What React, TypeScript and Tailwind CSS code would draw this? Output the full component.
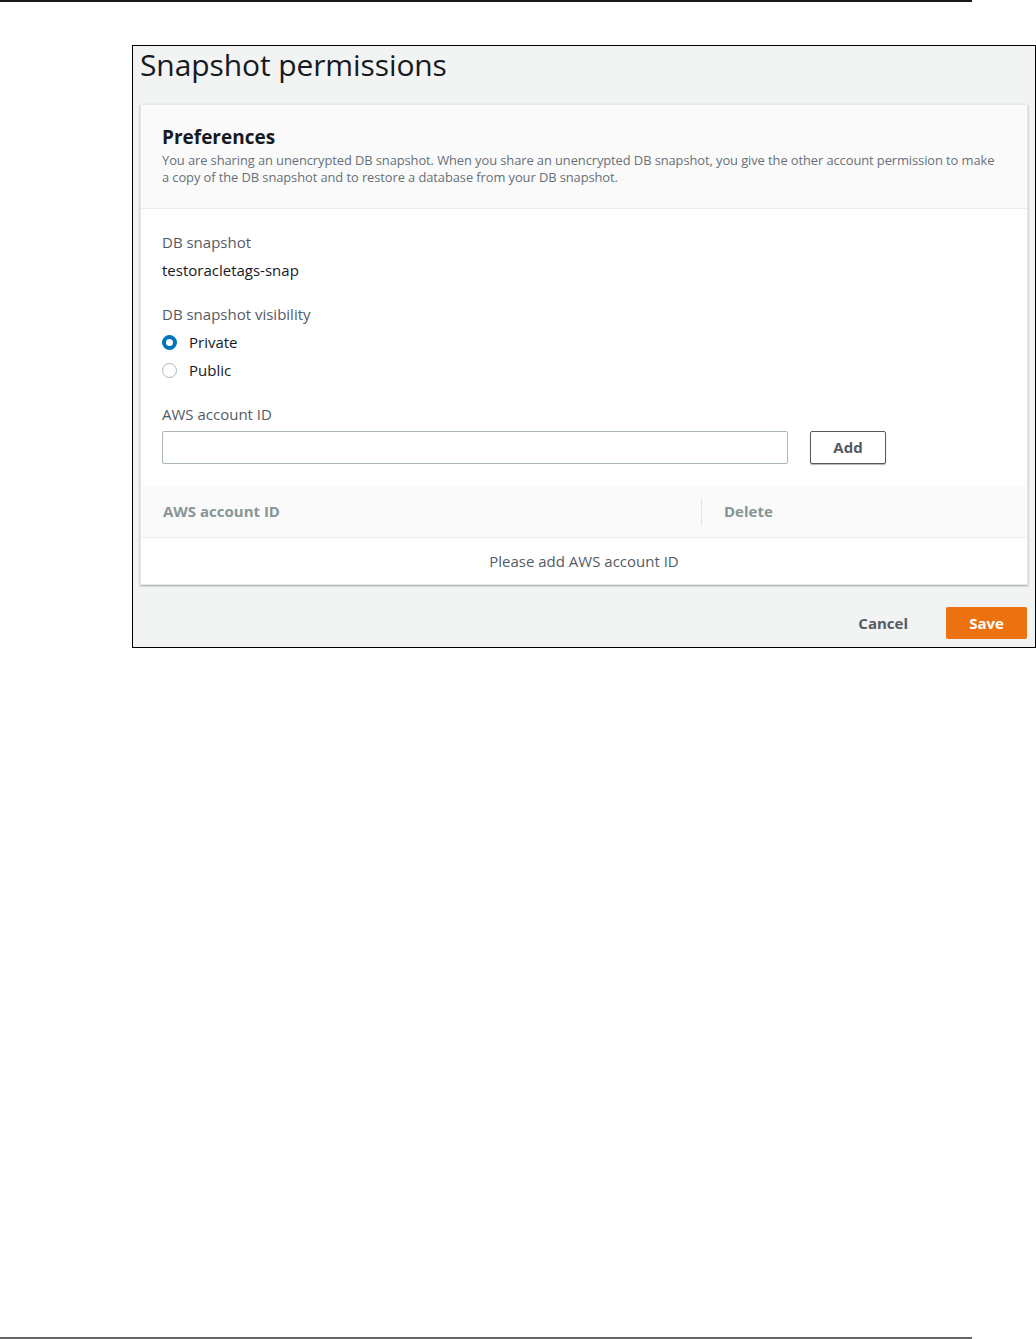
import React from "react";

export default function App() {
  const font = { fontFamily: '"Open Sans", "Noto Sans", sans-serif' };
  return (
    <div className="relative w-[1036px] h-[1339px] bg-white" style={font}>
      <div className="absolute left-0 top-0 w-[972px] h-[2px] bg-[#1a1a1a]" />
      <div className="absolute left-0 top-[1337px] w-[972px] h-[2px] bg-[#666]" />
      <div className="pt-[45px] pl-[132px]">
        <div className="w-[904px] h-[603px] border border-black bg-[#f2f3f3] flex flex-col px-[7px]">
          <div className="h-[58px] text-[30px] leading-[38px] text-[#16191f] tracking-[-0.1px]">Snapshot permissions</div>
          <div className="bg-white shadow-[0_1px_2px_rgba(0,0,0,0.35)] border border-[#e5e7e8]">
            <div className="bg-[#fafafa] border-b border-[#eaeded] h-[104px] px-[21px] pt-[19px]">
              <div className="text-[19px] font-bold text-[#16191f] leading-[26px]">Preferences</div>
              <div className="whitespace-nowrap text-[12.9px] leading-[17px] text-[#687078] mt-[2px] tracking-[-0.08px]">
                You are sharing an unencrypted DB snapshot. When you share an unencrypted DB snapshot, you give the other account permission to make
                <br />
                a copy of the DB snapshot and to restore a database from your DB snapshot.
              </div>
            </div>
            <div className="px-[21px] pt-[22px] pb-[22px]">
              <div className="text-[15px] text-[#545b64] leading-[22px]">DB snapshot</div>
              <div className="text-[15px] text-[#16191f] leading-[22px] mt-[6px]">testoracletags-snap</div>
              <div className="text-[15px] text-[#545b64] leading-[22px] mt-[22px]">DB snapshot visibility</div>
              <div className="flex items-center gap-[12px] mt-[6px] h-[22px]">
                <span className="w-[15px] h-[15px] rounded-full border-[4px] border-[#0073bb] bg-white" />
                <span className="text-[15px] text-[#16191f]">Private</span>
              </div>
              <div className="flex items-center gap-[12px] mt-[6px] h-[22px]">
                <span className="w-[15px] h-[15px] rounded-full border border-[#aab7b8] bg-white" />
                <span className="text-[15px] text-[#16191f]">Public</span>
              </div>
              <div className="text-[15px] text-[#545b64] leading-[22px] mt-[22px]">AWS account ID</div>
              <div className="flex items-center mt-[6px]">
                <div className="w-[626px] h-[33px] border border-[#aab7b8] rounded-[2px] bg-white" />
                <button className="ml-[22px] w-[76px] h-[33px] border border-[#545b64] rounded-[2px] bg-white text-[15px] font-bold text-[#545b64] shadow-[0_1px_1px_rgba(0,0,0,0.3)]">Add</button>
              </div>
            </div>
            <div className="bg-[#fafafa] h-[52px] flex items-center border-b border-[#eaeded]">
              <div className="w-[560px] pl-[22px] text-[15px] font-bold text-[#879596]">AWS account ID</div>
              <div className="h-[28px] w-px bg-[#e1e4e5]" />
              <div className="pl-[22px] text-[15px] font-bold text-[#879596]">Delete</div>
            </div>
            <div className="h-[46px] flex items-center justify-center text-[15px] text-[#545b64]">Please add AWS account ID</div>
          </div>
          <div className="flex justify-end items-center pt-[22px] pr-px">
            <span className="text-[15px] font-bold text-[#545b64] mr-[38px]">Cancel</span>
            <button className="w-[81px] h-[32px] bg-[#ec7211] text-white font-bold text-[15px] rounded-[2px]">Save</button>
          </div>
        </div>
      </div>
    </div>
  );
}
